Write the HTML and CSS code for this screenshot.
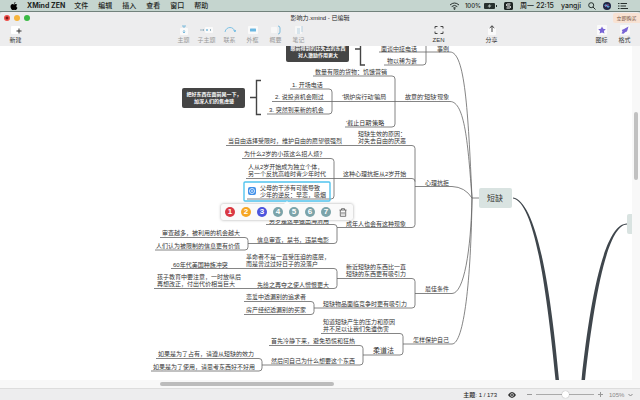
FILE: index.html
```html
<!DOCTYPE html>
<html lang="zh-CN">
<head>
<meta charset="utf-8">
<title>影响力.xmind</title>
<link rel="stylesheet" href="styles.css">
</head>
<body>
<header class="menubar">
  <svg class="apple" width="8" height="8" viewBox="0 0 16 16"><path d="M11 0c0 2-1.500 3.500-3.200 3.700C7.700 2 9.200.3 11 0zM8 5c.8 0 1.800-1 3.400-1 1.200 0 2.300.6 3 1.600-2.600 1.600-2.200 5 .5 6.100C14.200 13.600 12.800 16 11.200 16c-1.200 0-1.600-.7-3-.7s-1.900.7-3 .7C3.200 16 1 12.300 1 9c0-3 2-5 4-5 1.400 0 2.300 1 3 1z"/></svg>
  <strong class="app">XMind ZEN</strong>
  <nav class="menus"><a href="#">文件</a><a href="#">编辑</a><a href="#">插入</a><a href="#">查看</a><a href="#">窗口</a><a href="#">帮助</a></nav>
  <div class="tray">
    <svg width="11" height="8" viewBox="0 0 11 8" fill="none" stroke="#26302d"><path d="M1 3q4.500-4 9 0M2.700 4.600q2.800-2.400 5.600 0M4.300 6q1.200-1 2.400 0"/><circle cx="5.500" cy="7" r=".5"/></svg>
    <span class="charge">100%</span>
    <svg width="13" height="6" viewBox="0 0 13 6"><rect width="11" height="6" rx="1" fill="#26302d"/><path d="M12 2h1v2h-1z" fill="#26302d"/><path d="M6.500.5 3.500 3.400h2L4.500 5.500l3-2.900h-2z" fill="#c5d5cf"/></svg>
    <svg class="input-method" width="9" height="8" viewBox="0 0 9 8"><rect width="9" height="8" rx="1.500" fill="#1d2523"/><path d="M6.500 2H3.300Q2.500 2 2.500 3t.8 1h2.400q.8 0 .8 1t-.8 1H2.500" fill="none" stroke="#fff"/></svg>
    <span class="clock">周一 22:15</span>
    <span>yangji</span>
    <svg width="8" height="8" viewBox="0 0 8 8" fill="none" stroke="#26302d"><circle cx="3.200" cy="3.200" r="2.500"/><path d="m5 5 2.500 2.500"/></svg>
    <svg width="8" height="8" viewBox="0 0 8 8"><circle cx="4" cy="4" r="4" fill="#202645"/><path d="M1 4q1.500-3 3-1t3 1q-1.500 3-3 1T1 4" fill="#56a8de"/><path d="M2 5q2-3 4-2" fill="none" stroke="#d66ab3" stroke-width=".7"/></svg>
    <svg width="10" height="8" viewBox="0 0 10 8" fill="none" stroke="#26302d"><path d="M0 1.500h1.500M0 4h1.500M0 6.500h1.500M2.500 1.500H9M2.500 4H8M2.500 6.500H10"/></svg>
  </div>
</header>

<main class="window">
  <div class="titlebar">
    <div class="lights"><i class="light close"></i><i class="light minimize"></i><i class="light maximize"></i></div>
    <h1>影响力.xmind - 已编辑</h1>
    <button class="buy">立即购买</button>
  </div>
  <div class="toolbar">
    <div class="tools tools-file">
      <button><svg width="12" height="10" viewBox="0 0 12 10"><rect x="1" y="1" width="9" height="8" rx="1" fill="#fff"/><path d="M9 3.500v5M6.500 6h5" stroke="#333" fill="none"/></svg>新建</button>
    </div>
    <div class="tools tools-insert">
      <button disabled><svg width="12" height="10" viewBox="0 0 12 10"><rect x="2" y="3" width="8" height="7" rx="1" fill="#fafafa"/><path d="M4 1h4M6 1v2M6 5v3M4.800 6.800 6 8l1.200-1.200" stroke="#7dbbdc" fill="none"/></svg>主题</button>
      <button disabled><svg width="14" height="10" viewBox="0 0 14 10"><rect x="5" y="2" width="8" height="6" rx="1" fill="#fafafa"/><path d="M0 5h4M3 4l1 1-1 1" stroke="#9eb5c2" fill="none"/><circle cx="7" cy="5" r="1" fill="#7dbbdc"/><path d="M10.500 4v2" stroke="#9eb5c2"/></svg>子主题</button>
      <button disabled><svg width="12" height="10" viewBox="0 0 12 10"><path d="M1 7c1-6 9-6 10 0M9.500 5.500 11 7l.7-2" stroke="#7dc1e4" fill="none"/></svg>联系</button>
      <button disabled><svg width="12" height="10" viewBox="0 0 12 10"><rect x="1" y="1" width="10" height="8" rx="1" fill="#fafafa"/><rect x="3" y="3.500" width="6" height="3" rx=".5" fill="#6bb8e2"/></svg>外框</button>
      <button disabled><svg width="12" height="10" viewBox="0 0 12 10"><rect x="1" y="2" width="6" height="6" rx="1" fill="#f7f7f7"/><path d="M8 1q2 0 2 2v4q0 2-2 2" stroke="#7dbbdc" fill="none"/></svg>概要</button>
      <button disabled><svg width="12" height="10" viewBox="0 0 12 10"><rect x="2" y="1" width="7" height="8" rx="1" fill="#f7f7f7"/><path d="M4 4h3M4 6h3M4 8h3M9 1v6" stroke="#b6d1e1" fill="none"/></svg>笔记</button>
    </div>
    <div class="tools tools-view">
      <button><svg width="12" height="10" viewBox="0 0 12 10"><path d="M2 3.500V1.500h2.500M7.500 1.500H10v2M10 6.500v2H7.500M4.500 8.500H2v-2" stroke="#444" fill="none"/></svg>ZEN</button>
      <button><svg width="12" height="10" viewBox="0 0 12 10"><rect x="2" y="3" width="8" height="7" rx="1" fill="#fafafa"/><path d="M6 7V.8M3.700 3 6 .8 8.300 3" stroke="#444" fill="none"/></svg>分享</button>
    </div>
    <div class="tools tools-panel">
      <button><svg width="12" height="10" viewBox="0 0 12 10"><rect x="1" width="10" height="10" rx="1" fill="#fafafa"/><path d="m6 1.500 1.200 2.300 2.600.4-1.900 1.800.5 2.600L6 7.400 3.600 8.600l.5-2.600-1.900-1.800 2.600-.4z" fill="#7965d6"/></svg>图标</button>
      <button><svg width="12" height="10" viewBox="0 0 12 10"><rect x="1" width="10" height="10" rx="1" fill="#fafafa"/><path d="M9.500 1.500 8 6.500 6.500 7 4.500 8.800 2.500 8.500 3.500 6.500 2.800 5 5 4z" fill="#7965d6"/></svg>格式</button>
    </div>
  </div>

  <div class="workspace">
    <section class="canvas">
      <svg class="map" width="100%" height="100%">
        <g transform="translate(0 -46)">
          <g class="wires">
            <path d="M379 52H450C465 52 468 110 472 198M384 65H423Q426 65 426 62V46"/>
            <path d="M313 76H392Q395 76 395 79V124Q395 127 392 127H345"/>
            <path d="M290 89H329Q332 89 332 92V111Q332 114 329 114H267"/>
            <path d="M272 101.500H450C465 101.500 468 145 472 198"/>
            <path d="M226 145.500H412Q415 145.500 415 148.500V224.500Q415 227.500 412 227.500H337"/>
            <path d="M242 158.500H331Q334 158.500 334 161.500V196Q334 199 331 199H247"/>
            <path d="M246 178.500H412Q415 178.500 415 181.500"/>
            <path d="M415 186.500H452Q465 187 472 198H479"/>
            <path d="M266 224.500H334Q337 224.500 337 227.500V240.500Q337 243.500 334 243.500H248"/>
            <path d="M160 237.500H245Q248 237.500 248 240.500V247Q248 250 245 250H155"/>
            <path d="M171 268.500H334Q337 268.500 337 271.500V285.500Q337 288.500 334 288.500H154"/>
            <path d="M337 278.500H412Q415 278.500 415 281.500V305Q415 308 412 308H314"/>
            <path d="M244 301.500H311Q314 301.500 314 304.500V311.500Q314 314.500 311 314.500H244"/>
            <path d="M415 293.500H452C464 293.500 471 250 472 198"/>
            <path d="M321 333.500H400Q403 333.500 403 336.500V352Q403 355 400 355H363"/>
            <path d="M403 344H452C464 344 471 280 472 198"/>
            <path d="M269 345.500H360Q363 345.500 363 348.500V362Q363 365 360 365H262"/>
            <path d="M156 358.500H259Q262 358.500 262 361.500V368Q262 371 259 371H151"/>
          </g>
          <g class="brackets"><path d="M250 97.500H256M261 80.500H256.500V114.500H261M355 49H360M360.500 46V65H365"/></g>
          <path class="branch" d="M513 197.500C534 201 549 270 559 380H555.500C545 270 532 202 513 198.500zM627 223.500C604 224 590 300 581.500 380H585C594 300 607 225 627 224.500z"/>

          <rect class="summary" x="182" y="88" width="63" height="20" rx="2"/>
          <rect class="summary" x="286" y="42" width="63" height="20" rx="2"/>
          <g class="summary-text">
            <text x="214" y="96">把好东西在面前晃一下，</text><text x="214" y="103">加深人们的焦虑感</text>
            <text x="318" y="50">眼前得到的比失去的东西</text><text x="318" y="57">对人激励作用更大</text>
          </g>
          <rect class="main-topic" x="479" y="188" width="33" height="20" rx="2"/>
          <rect class="main-topic" x="627" y="214" width="33" height="20" rx="2"/>
          <text class="main-text" x="495" y="201">短缺</text>

          <g class="topics">
            <text x="381" y="51">面谈中接电话</text><text x="387" y="63">物以稀为贵</text><text x="437" y="51">事例</text>
            <text x="315" y="74">数量有限的货物：饥饿营销</text>
            <text x="292" y="87">1. 开场电话</text><text x="275" y="99">2. 说投资机会刚过</text><text x="269" y="112">3. 突然到来新的机会</text>
            <text x="342" y="99">'锅炉房行动'骗局</text><text x="346" y="125">'截止日期'策略</text><text x="405" y="99">故意的'短缺'现象</text>
            <text x="358" y="136">短缺生效的原因：</text><text x="358" y="143">对失去自由的厌恶</text>
            <text x="228" y="143">当自由选择受限时，维护自由的愿望很强烈</text>
            <text x="244" y="156">为什么2岁的小孩这么招人烦？</text>
            <text x="248" y="169">人从2岁开始成为独立个体，</text><text x="248" y="176">另一个反抗高峰时青少年时代</text>
            <text x="260" y="190">父母的干涉有可能导致</text><text x="260" y="197">少年的逆反：早恋，吸烟</text>
            <text x="343" y="176">这种心理抗拒从2岁开始</text><text x="425" y="185">心理抗拒</text>
            <text x="269" y="223">男岁是这单做出海清用</text><text x="346" y="226">成年人也会有这种现象</text>
            <text x="257" y="242">信息审查，禁书，违禁电影</text>
            <text x="162" y="235">审查越多，被利用的机会越大</text><text x="156" y="248">人们认为被限制的信息更有价值</text>
            <text x="173" y="267">60年代美国种族冲突</text>
            <text x="246" y="259">革命者不是一直受压迫的底层，</text><text x="246" y="266">而是曾过过好日子的没落户</text>
            <text x="157" y="279">孩子教育中要注意，一时放纵后</text><text x="157" y="286">再想改正，付出代价相当巨大</text>
            <text x="257" y="287">先给之再夺之使人憎恨更大</text>
            <text x="346" y="269">新近短缺的东西比一直</text><text x="346" y="276">短缺的东西更有吸引力</text>
            <text x="323" y="306">短缺物品面临竞争时更有吸引力</text><text x="425" y="291">最佳条件</text>
            <text x="246" y="299">恋爱中透漏别的追求者</text><text x="246" y="312">房产经纪透漏别的买家</text>
            <text x="323" y="324">知道短缺产生的压力和原因</text><text x="323" y="331">并不足以让我们免遭伤害</text>
            <text x="413" y="342">怎样保护自己</text>
            <text x="271" y="343">首先冷静下来，避免恐慌和狂热</text><text x="271" y="363">然后问自己为什么想要这个东西</text>
            <text class="large" x="373" y="353">柔道法</text>
            <text x="158" y="356">如果是为了占有，请遵从短缺的效力</text><text x="153" y="369">如果是为了使用，请思考东西好不好用</text>
          </g>
          <rect class="selection" x="244" y="182" width="86" height="19" rx="1"/>
          <rect x="248" y="187" width="8" height="8" rx="2" fill="#3f8fe8"/><circle cx="252" cy="191" r="2.500" fill="none" stroke="#d5e9ff"/><path d="M251 191h2" stroke="#fff"/>
        </g>
      </svg>
      <div class="markers">
        <button class="marker red">1</button><button class="marker amber">2</button><button class="marker blue">3</button><button class="marker">4</button><button class="marker">5</button><button class="marker">6</button><button class="marker">7</button>
        <button class="trash" aria-label="删除"><svg width="8" height="9" viewBox="0 0 8 9" fill="none" stroke="#555" stroke-width=".8"><path d="M.5 2h7M2.500 2V.7h3V2M1.300 2v6.300h5.400V2M3 4v2.500M5 4v2.500"/></svg></button>
      </div>
    </section>
    <div class="scroll-y"><div class="thumb-y"></div></div>
  </div>
  <div class="scroll-x"><div class="thumb-x"></div></div>
  <footer class="status">
    <span class="count">主题: 1 / 173</span>
    <svg width="8" height="6" viewBox="0 0 8 6"><path d="M0 3q4-6 8 0-4 6-8 0z" fill="#333"/><circle cx="4" cy="3" r="1.700" fill="#eee"/><circle cx="4" cy="3" r="1" fill="#333"/></svg>
    <div class="zoom">
      <button aria-label="缩小"><svg width="5" height="5" viewBox="0 0 5 5"><path d="M0 2.500h5" stroke="#999"/></svg></button>
      <input type="range" min="0" max="100" value="50" aria-label="缩放">
      <button aria-label="放大"><svg width="5" height="5" viewBox="0 0 5 5"><path d="M0 2.500h5M2.500 0v5" stroke="#999"/></svg></button>
    </div>
    <div class="level"><select aria-label="缩放比例"><option>105%</option></select><svg width="5" height="4" viewBox="0 0 5 4"><path d="m.5 1 2 2 2-2" fill="none" stroke="#888"/></svg></div>
  </footer>
</main>
</body>
</html>
```

FILE: styles.css
```css
* { box-sizing: border-box; }

body {
  margin: 0;
  height: 100vh;
  display: flex;
  flex-direction: column;
  overflow: hidden;
  background: #c5d5cf;
  color: #333;
  font-family: "Liberation Sans", "Noto Sans CJK SC", sans-serif;
  font-size: 6px;
  line-height: 8px;
}

svg { display: block; flex: none; }

button {
  margin: 0;
  padding: 0;
  border: 0;
  background: none;
  color: inherit;
  font: inherit;
}

.menubar {
  display: flex;
  align-items: center;
  height: 12px;
  padding: 0 12px 0 10px;
  border-bottom: 1px solid #72827c;
  color: #1c2422;
  font-family: Inter, "Noto Sans CJK SC", sans-serif;
  font-size: 7px;
  font-weight: 500;
  white-space: nowrap;
}
.app { margin-left: 9px; font-weight: 700; }
.menus { display: flex; gap: 10px; margin-left: 9px; }
.menus a { color: inherit; text-decoration: none; }
.tray { display: flex; align-items: center; gap: 7px; margin-left: auto; }
.charge { margin: 0 -4px 0 -2px; font-size: 6px; }

.window {
  flex: 1;
  min-height: 0;
  display: flex;
  flex-direction: column;
  border-radius: 3px 3px 0 0;
  background: #ededee;
  overflow: hidden;
}

.titlebar {
  display: grid;
  grid-template-columns: 1fr auto 1fr;
  align-items: center;
  height: 11px;
}
.titlebar h1 { margin: 0; font-size: 6px; font-weight: 400; color: #222; }
.lights { display: flex; gap: 4px; padding-left: 4px; }
.light { width: 6px; height: 6px; border-radius: 50%; }
.close { background: radial-gradient(#7a1715 20%, #ee4d48 45%); }
.minimize { background: #f6b43c; }
.maximize { background: #3bba45; }
.buy {
  justify-self: end;
  width: 27px;
  height: 10px;
  border-radius: 2px 0 0 2px;
  background: #f8e2d3;
  color: #6b4a35;
  font-size: 5px;
}

.toolbar { display: flex; height: 23px; padding: 2px 4px 0; }
.tools { display: flex; }
.tools button {
  display: flex;
  flex-direction: column;
  align-items: center;
  gap: 1px;
  width: 23px;
  font-size: 6px;
  color: #333;
}
.tools button:disabled { color: #999; }
.tools-insert { margin-left: 145px; }
.tools-view { margin-left: 117px; gap: 30px; }
.tools-panel { margin-left: auto; }

.workspace { flex: 1; min-height: 0; display: flex; }
.canvas { position: relative; flex: 1; overflow: hidden; background: #fff; }
.map { position: absolute; inset: 0; }
.wires { fill: none; stroke: #666; stroke-width: 0.8; }
.brackets { fill: none; stroke: #444; stroke-width: 1.4; }
.branch { fill: #3f464c; }
.summary { fill: #454545; }
.summary-text { fill: #fff; font-size: 5px; font-weight: 700; text-anchor: middle; }
.main-topic { fill: #d9e3e1; }
.main-text { fill: #333; font-size: 8px; text-anchor: middle; }
.topics { fill: #333; font-size: 6px; }
.topics .large { font-size: 7px; }
.selection { fill: none; stroke: #52c4ee; stroke-width: 1.4; }

.markers {
  position: absolute;
  left: 221px;
  top: 158px;
  display: flex;
  align-items: center;
  gap: 6px;
  height: 16px;
  padding: 0 6px 0 4px;
  border-radius: 2px;
  background: #fafafa;
  box-shadow: 0 0 3px rgba(0, 0, 0, 0.35);
}
.markers::before {
  content: "";
  position: absolute;
  left: 63px;
  top: -3px;
  border: 3px solid transparent;
  border-top: 0;
  border-bottom-color: #fafafa;
}
.marker {
  width: 10px;
  height: 10px;
  border-radius: 50%;
  background: #7ba3a9;
  color: #fff;
  font-size: 8px;
  font-weight: 700;
  line-height: 10px;
}
.red { background: #d93843; }
.amber { background: #f6a623; }
.blue { background: #4c55dd; }
.trash { margin-left: 2px; }

.scroll-y { width: 8px; padding: 66px 2px 0; background: #f8f8f8; }
.thumb-y { height: 68px; border-radius: 2px; background: #c1c1c1; }
.scroll-x { height: 8px; padding: 2px 0 0 160px; background: #f8f8f8; }
.thumb-x { width: 174px; height: 4px; border-radius: 2px; background: #bcbcbc; }

.status {
  display: flex;
  align-items: center;
  justify-content: flex-end;
  gap: 11px;
  height: 12px;
  padding: 0 7px;
  border-top: 1px solid #ddd;
}
.count { color: #222; font-weight: 500; }
.zoom { display: flex; align-items: center; gap: 4px; }
.zoom input {
  appearance: none;
  width: 58px;
  height: 7px;
  margin: 0;
  background: linear-gradient(#aaa, #aaa) center / 100% 1px no-repeat;
}
.zoom input::-webkit-slider-thumb {
  appearance: none;
  width: 7px;
  height: 7px;
  border-radius: 50%;
  background: #fff;
  box-shadow: 0 0 1px #888;
}
.level { display: flex; align-items: center; gap: 3px; margin-left: -5px; }
.level select {
  appearance: none;
  width: 16px;
  padding: 0;
  border: 0;
  background: none;
  color: #888;
  font: inherit;
}
```
